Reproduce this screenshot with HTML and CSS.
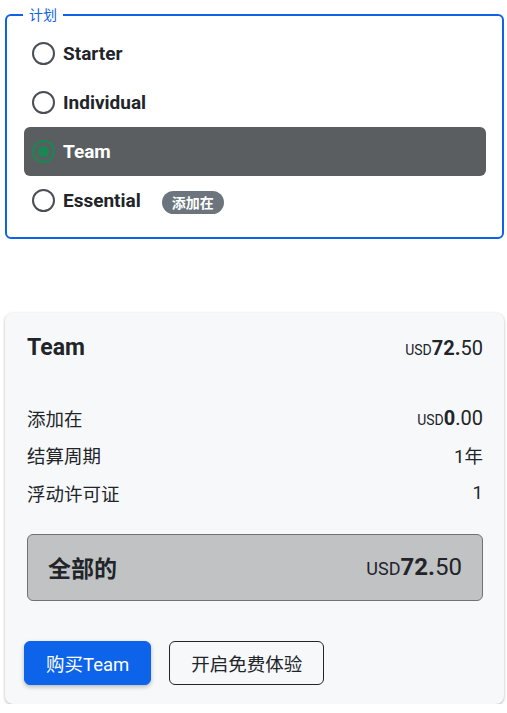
FILE: index.html
```html
<!DOCTYPE html>
<html lang="zh">
<head>
<meta charset="utf-8">
<title>计划</title>
<link rel="stylesheet" href="styles.css">
</head>
<body>
<div class="page">
  <fieldset class="plans">
    <legend class="plans-legend">计划</legend>
    <label class="plan">
      <span class="radio"></span>
      <span class="plan-name">Starter</span>
    </label>
    <label class="plan">
      <span class="radio"></span>
      <span class="plan-name">Individual</span>
    </label>
    <label class="plan plan-active">
      <span class="radio radio-checked"><span class="radio-dot"></span></span>
      <span class="plan-name">Team</span>
    </label>
    <label class="plan">
      <span class="radio"></span>
      <span class="plan-name">Essential</span>
      <span class="badge">添加在</span>
    </label>
  </fieldset>

  <section class="summary">
    <div class="summary-head">
      <h2 class="summary-title">Team</h2>
      <span class="price"><span class="cur">USD</span><b>72.</b>50</span>
    </div>
    <div class="line">
      <span>添加在</span>
      <span class="price price-line"><span class="cur">USD</span><b>0</b>.00</span>
    </div>
    <div class="line">
      <span>结算周期</span>
      <span>1年</span>
    </div>
    <div class="line">
      <span>浮动许可证</span>
      <span>1</span>
    </div>
    <div class="total">
      <span class="total-label">全部的</span>
      <span class="price price-total"><span class="cur">USD</span><b>72.</b>50</span>
    </div>
    <div class="actions">
      <button class="btn btn-primary">购买Team</button>
      <button class="btn btn-outline">开启免费体验</button>
    </div>
  </section>
</div>
</body>
</html>
```
FILE: styles.css
```css
html, body {
  margin: 0;
  padding: 0;
  background: #ffffff;
}
body {
  font-family: "Roboto", "Noto Sans CJK SC", sans-serif;
  color: #212529;
}
.page {
  padding: 7px 3px 0 5px;
}
.plans {
  margin: 0;
  border: 2px solid #0d62e8;
  border-radius: 6px;
  padding: 6px 16px 12px 17px;
  min-width: 0;
}
.plans-legend {
  font-size: 14px;
  line-height: 16px;
  color: #0d62e8;
  padding: 0 6px;
  margin-left: -1px;
}
.plan {
  display: flex;
  align-items: center;
  height: 49px;
  padding-left: 8px;
  border-radius: 6px;
  font-size: 19px;
  font-weight: 700;
  color: #212529;
}
.plan-active {
  background: #5b5e61;
  color: #ffffff;
}
.radio {
  box-sizing: border-box;
  width: 23px;
  height: 23px;
  border: 2px solid #4a4f55;
  border-radius: 50%;
  margin-right: 8px;
  display: flex;
  align-items: center;
  justify-content: center;
  flex: none;
}
.radio-checked {
  border-color: #198754;
}
.radio-dot {
  width: 11px;
  height: 11px;
  border-radius: 50%;
  background: #198754;
}
.badge {
  margin-left: 21px;
  margin-top: 3px;
  height: 23px;
  padding: 0 10px;
  border-radius: 12px;
  background: #6c757d;
  color: #ffffff;
  font-size: 14px;
  font-weight: 700;
  display: flex;
  align-items: center;
}
.summary {
  margin-top: 74px;
  background: #f7f8fa;
  border-radius: 8px;
  box-shadow: 0 1px 3px rgba(0, 0, 0, 0.3);
  padding: 20px 21px 19px 22px;
}
.summary-head {
  display: flex;
  justify-content: space-between;
  align-items: center;
  height: 30px;
  margin-bottom: 36px;
}
.summary-title {
  margin: 0;
  font-size: 23px;
  font-weight: 700;
  line-height: 30px;
}
.price {
  font-size: 20px;
  white-space: nowrap;
}
.price b {
  font-weight: 700;
}
.cur {
  font-size: 14px;
}
.line {
  display: flex;
  justify-content: space-between;
  align-items: center;
  height: 37.5px;
  font-size: 18.5px;
}
.total {
  margin-top: 22px;
  box-sizing: border-box;
  height: 67px;
  display: flex;
  justify-content: space-between;
  align-items: center;
  padding: 0 20px;
  background: #c1c2c4;
  border: 1px solid #6c737b;
  border-radius: 6px;
}
.total-label {
  font-size: 23px;
  font-weight: 700;
}
.price-total {
  font-size: 24px;
}
.price-total .cur {
  font-size: 18px;
}
.actions {
  display: flex;
  gap: 18px;
  margin-top: 40px;
  margin-left: -3px;
}
.btn {
  font-family: "Roboto", "Noto Sans CJK SC", sans-serif;
  font-size: 18.5px;
  height: 44px;
  padding: 0 21px;
  border-radius: 6px;
  cursor: pointer;
}
.btn-primary {
  background: #0d63ea;
  color: #ffffff;
  border: 1px solid #0d63ea;
  box-shadow: 0 2px 4px rgba(0, 0, 0, 0.25);
}
.btn-outline {
  background: transparent;
  color: #212529;
  border: 1px solid #212529;
}
```
